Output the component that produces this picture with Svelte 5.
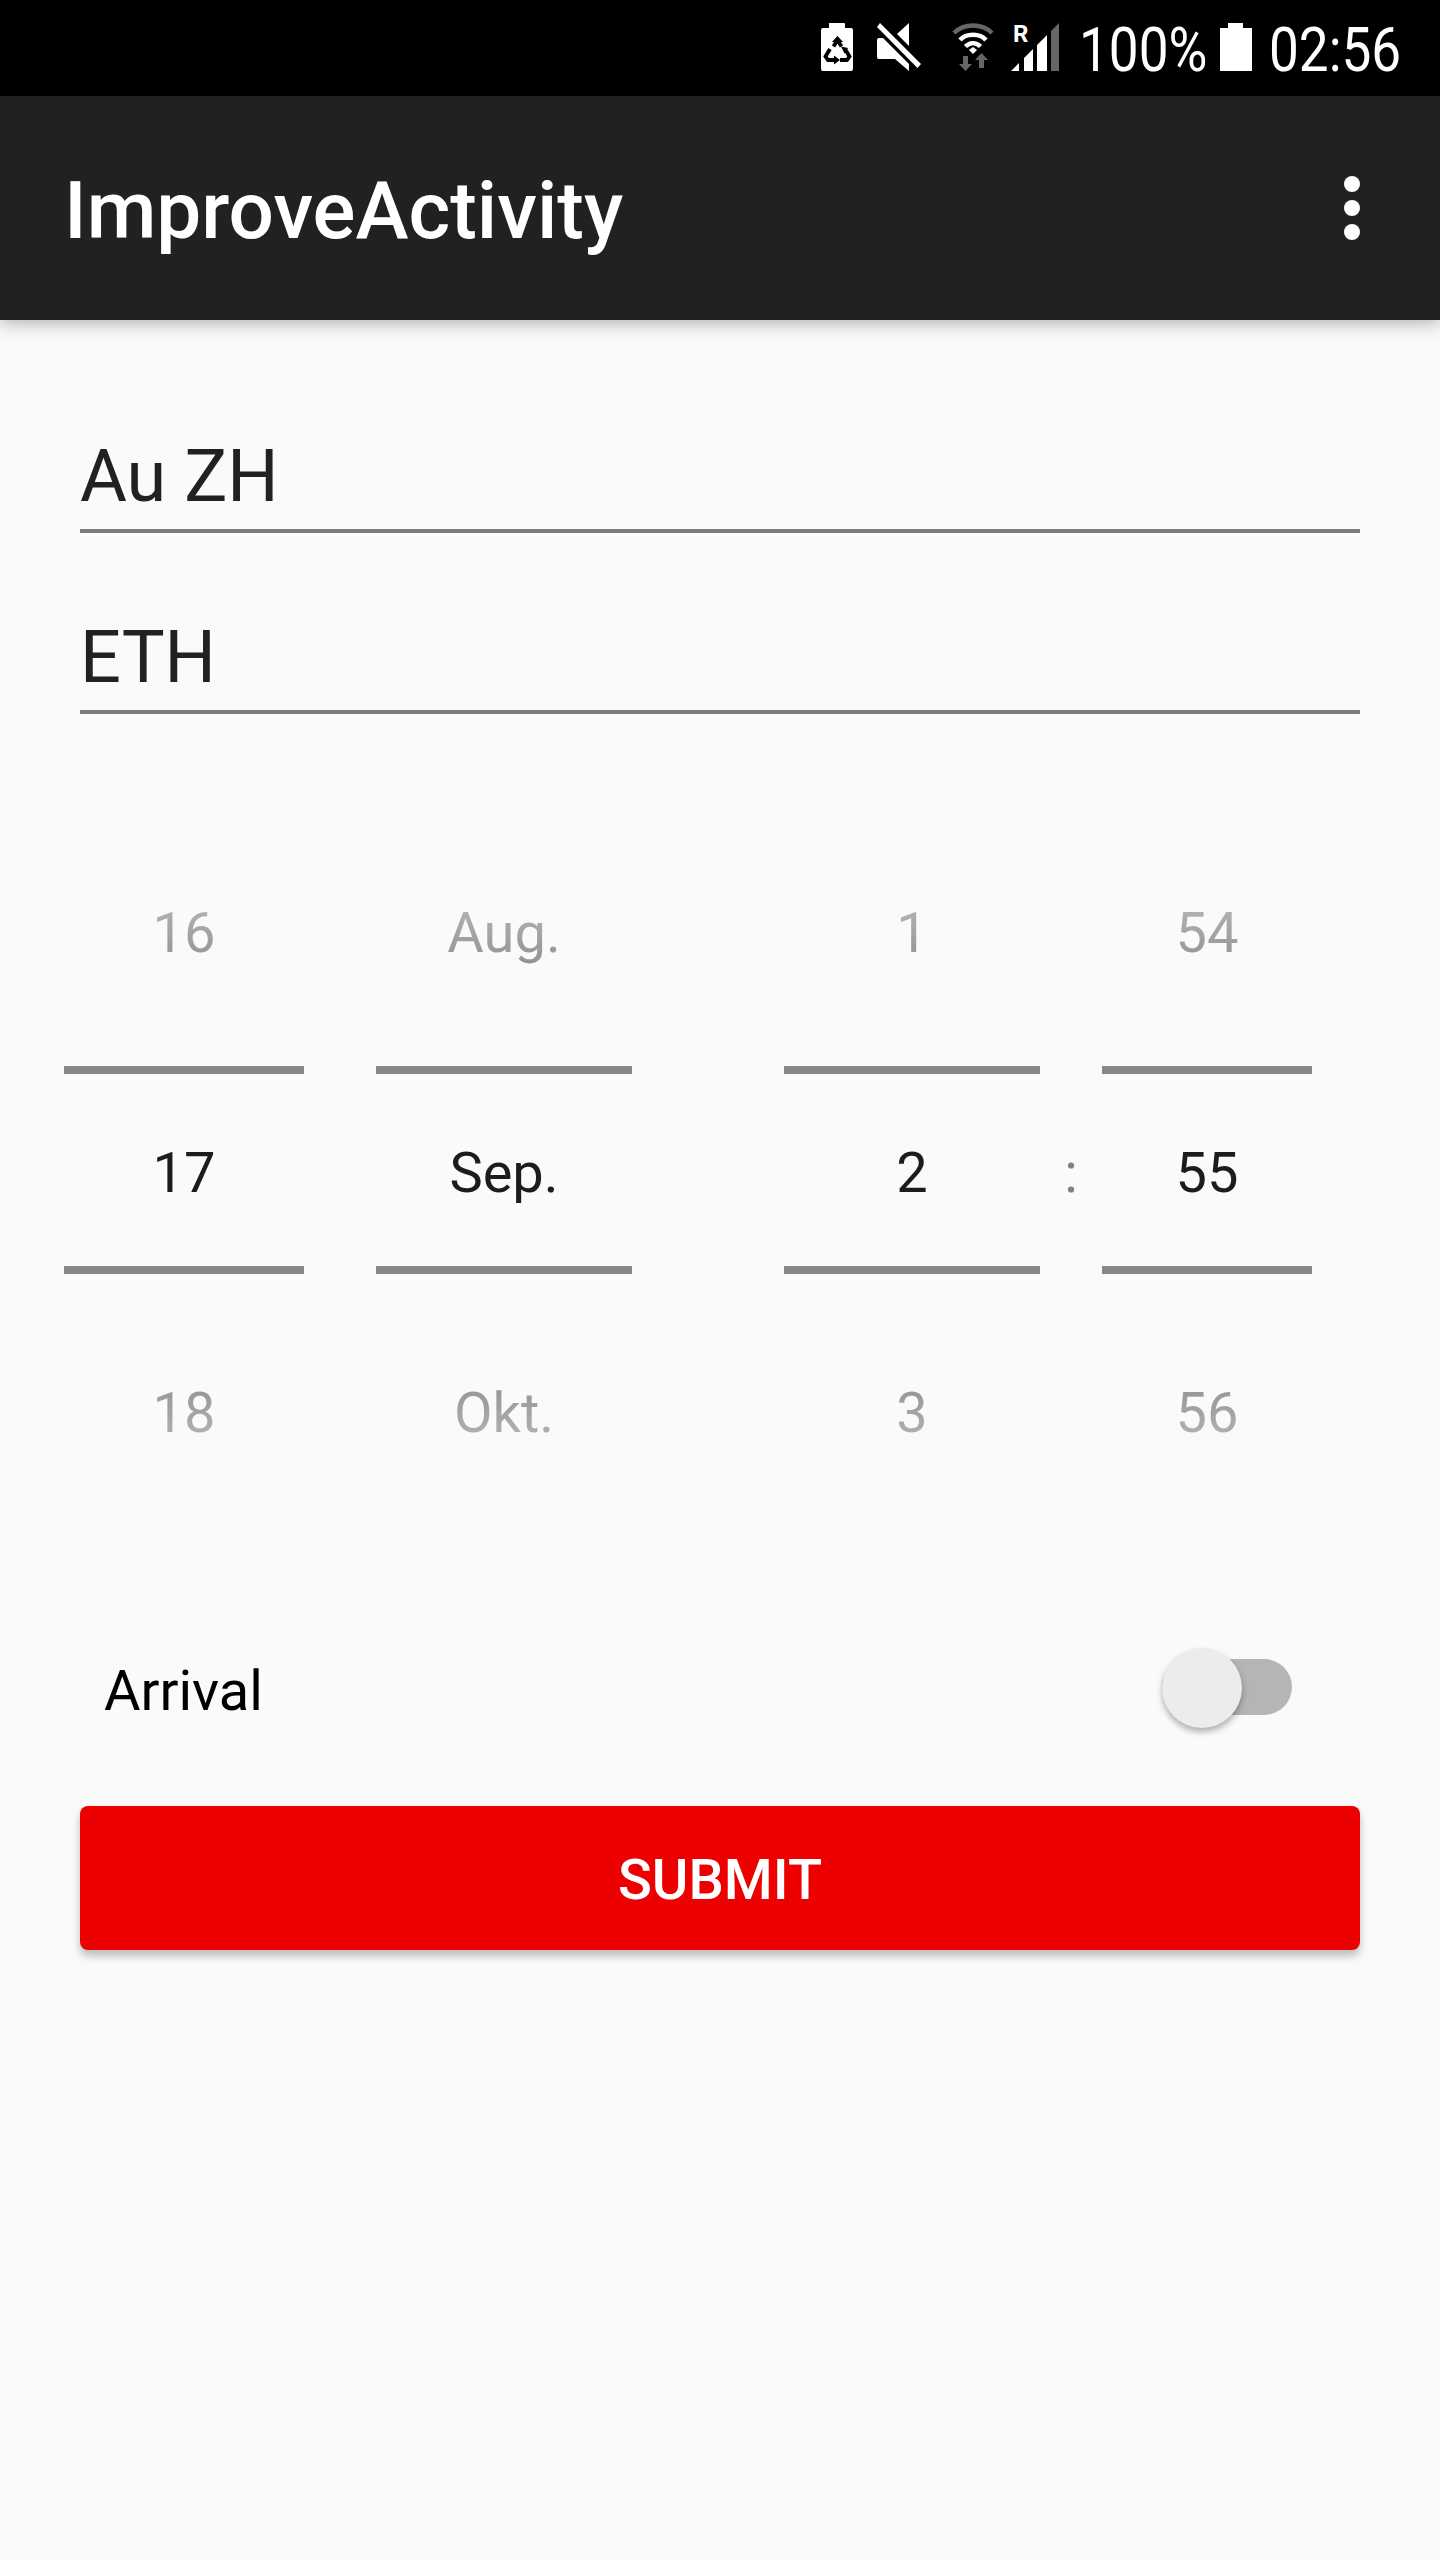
<script>
  const cols = [
    { cls: 'day', items: ['16', '17', '18'] },
    { cls: 'month', items: ['Aug.', 'Sep.', 'Okt.'] },
    { cls: 'hour', items: ['1', '2', '3'] },
    { cls: 'minute', items: ['54', '55', '56'] }
  ];
</script>

{#snippet picker(col)}
  <div class="picker {col.cls}">
    <div class="cell prev"><span>{col.items[0]}</span></div>
    <div class="cell now"><span>{col.items[1]}</span></div>
    <div class="cell next"><span>{col.items[2]}</span></div>
  </div>
{/snippet}

<div class="screen">
  <header class="status">
    <svg class="i-saver" width="32" height="48" viewBox="0 0 32 48">
      <path fill="#fff" d="M10 0h13a1 1 0 0 1 1 1v4h6a2 2 0 0 1 2 2v39a2 2 0 0 1-2 2H2a2 2 0 0 1-2-2V7a2 2 0 0 1 2-2h6V1a1 1 0 0 1 2-1z"/>
      <g fill="none" stroke="#000" stroke-width="3.800">
        <path d="M12.500 23.500L16.500 17l4 6.500"/>
        <path d="M9 26l-4.500 7.500 2.500 3.500h7"/>
        <path d="M24 26l4.500 7.500-2.500 3.500h-7"/>
      </g>
      <path d="M16.500 13l5.500 6h-11zM13 32.500v9l6-4.500zM20 23.500l7 1.500-3.500 5.500z" fill="#000"/>
    </svg>
    <svg class="i-mute" width="44" height="48" viewBox="0 0 44 48">
      <path fill="#fff" d="M32 0V23L20 11z"/>
      <path fill="#fff" d="M2 15h4L32 41v7L18 36H2a2 2 0 0 1-2-2V17a2 2 0 0 1 2-2z"/>
      <path fill="#fff" d="M3 0L44 41l-3.500 4L0 4z"/>
    </svg>
    <svg class="i-wifi" width="42" height="50" viewBox="0 0 42 50">
      <path d="M2 11C12 1 30 1 40 11" fill="none" stroke="#666" stroke-width="4.500"/>
      <path d="M8 18C14 11 28 11 34 18" fill="none" stroke="#fff" stroke-width="4.500"/>
      <path d="M13.500 24.500C18 20 24 20 28.500 24.500" fill="none" stroke="#fff" stroke-width="4.500"/>
      <path d="M17 28l4-3 4 3-4 4z" fill="#fff"/>
      <path d="M11 34h5v8h4l-6.500 7L7 42h4zM29.500 31L36 38h-4v8h-5v-8h-4z" fill="#666"/>
    </svg>
    <div class="signal">
      <span class="roam">R</span>
      <svg width="48" height="48" viewBox="0 0 48 48">
        <path d="M0 48l8-8v8zM13 35l9-9v22h-9zM26 22l10-10v36H26z" fill="#fff"/>
        <path d="M40 8l8-8v48h-8z" fill="#666"/>
      </svg>
    </div>
    <span class="pct">100%</span>
    <svg class="i-batt" width="32" height="48" viewBox="0 0 32 48">
      <path fill="#fff" d="M8 0h15v5h9v43H0V5h8z"/>
    </svg>
    <span class="clock">02:56</span>
  </header>

  <nav class="toolbar">
    <h1>ImproveActivity</h1>
    <div class="more"><i></i><i></i><i></i></div>
  </nav>

  <main>
    <div class="field"><span>Au ZH</span></div>
    <div class="field second"><span>ETH</span></div>

    <div class="wheels">
      <div class="date">
        {@render picker(cols[0])}
        {@render picker(cols[1])}
      </div>
      <div class="time">
        {@render picker(cols[2])}
        <span class="colon">:</span>
        {@render picker(cols[3])}
      </div>
    </div>

    <div class="arrival">
      <span>Arrival</span>
      <div class="switch"><b></b><em></em></div>
    </div>

    <button class="submit">SUBMIT</button>
  </main>
</div>

<style>
  :global(body) { margin: 0; background: #fafafa; }
  .screen { width: 1440px; height: 2560px; background: #fafafa; font-family: Roboto, sans-serif; overflow: hidden; }

  .status { height: 96px; background: #000; display: flex; align-items: flex-start; box-sizing: border-box; padding: 22px 0 0 821px; color: #fff; }
  .status svg { display: block; flex: none; }
  .i-saver { margin-top: 1px; }
  .i-mute { margin: 1px 0 0 24px; }
  .i-wifi { margin: 0 0 0 31px; }
  .signal { position: relative; margin: 1px 0 0 17px; width: 48px; height: 48px; }
  .roam { position: absolute; left: 2px; top: -2px; font-size: 24px; font-weight: 700; line-height: 26px; }
  .pct, .clock { font-size: 61px; line-height: 52px; font-weight: 400; margin-top: 2px; transform: scaleX(.87); transform-origin: left center; white-space: nowrap; }
  .pct { margin-left: 20px; width: 129px; }
  .i-batt { margin: 1px 0 0 12px; }
  .clock { margin-left: 17px; width: 133px; }

  .toolbar { height: 224px; background: #212121; display: flex; align-items: center; justify-content: space-between; padding: 0 80px 0 64px; box-shadow: 0 4px 16px rgba(0,0,0,.28); position: relative; }
  h1 { margin: 0; padding-top: 6px; font-size: 80px; line-height: 94px; font-weight: 500; color: #fff; }
  .more { display: flex; flex-direction: column; gap: 8px; }
  .more i { display: block; width: 16px; height: 16px; border-radius: 50%; background: #fff; }

  main { padding: 0 80px; }
  .field { height: 129px; margin-top: 80px; border-bottom: 4px solid #7c7c7c; display: flex; align-items: flex-end; }
  .field.second { margin-top: 48px; }
  .field span { font-size: 72px; line-height: 84px; color: #212121; padding-bottom: 10px; }

  .wheels { display: flex; margin: 86px 0 0 -16px; }
  .date { display: flex; gap: 72px; width: 720px; }
  .time { display: flex; align-items: flex-start; }
  .picker { display: flex; flex-direction: column; }
  .cell { display: flex; align-items: center; justify-content: center; font-size: 56px; box-sizing: border-box; }
  .cell span { display: block; }
  .prev, .next { color: transparent; }
  .prev { height: 266px; }
  .next { height: 278px; }
  .prev span { background: linear-gradient(#b6b6b6, #929292); -webkit-background-clip: text; background-clip: text; }
  .next span { background: linear-gradient(#929292, #b6b6b6); -webkit-background-clip: text; background-clip: text; }
  .now { color: #1c1c1c; height: 208px; padding-top: 6px; border-top: 8px solid #868686; border-bottom: 8px solid #868686; }
  .day { width: 240px; }
  .month { width: 256px; }
  .hour { width: 256px; }
  .minute { width: 210px; }
  .colon { width: 62px; text-align: center; font-size: 56px; color: #808080; padding-top: 343px; line-height: 60px; }

  .arrival { display: flex; align-items: center; justify-content: space-between; height: 80px; margin-top: 96px; padding: 0 68px 0 24px; }
  .arrival span { font-size: 56px; color: #000; padding-top: 6px; }
  .switch { position: relative; width: 130px; height: 80px; }
  .switch b { position: absolute; left: 0; right: 0; top: 11px; height: 56px; border-radius: 28px; background: #b5b5b5; }
  .switch em { position: absolute; left: 0; top: 0; width: 80px; height: 80px; border-radius: 50%; background: #ececec; box-shadow: 0 4px 6px rgba(0,0,0,.3); }

  .submit { display: block; width: 1280px; height: 144px; margin-top: 78px; padding: 4px 0 0; border: 0; border-radius: 8px; background: #ec0000; color: #fff; font: 500 56px Roboto, sans-serif; box-shadow: 0 6px 8px rgba(0,0,0,.25); }
</style>
